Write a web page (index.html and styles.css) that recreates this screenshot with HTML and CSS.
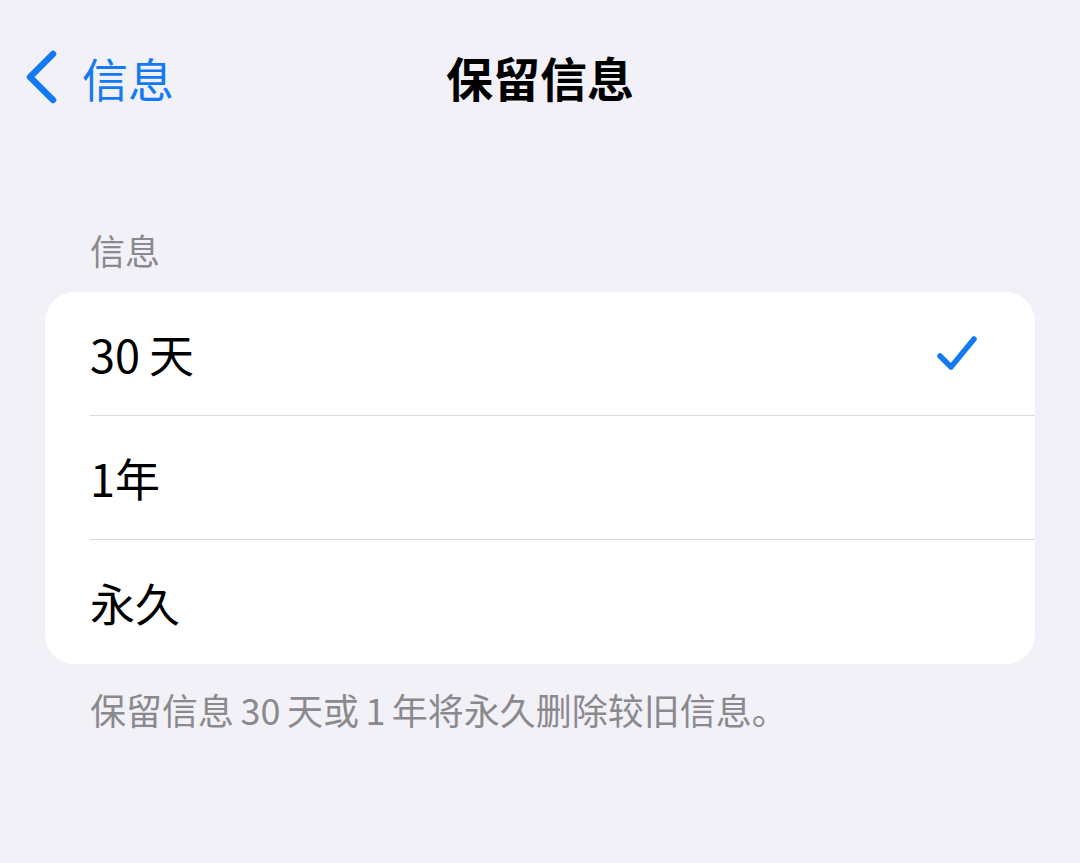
FILE: index.html
```html
<!DOCTYPE html>
<html lang="zh-CN">
<head>
    <meta charset="UTF-8">
    <meta name="viewport" content="width=device-width, initial-scale=1.0">
    <title>保留信息</title>
    <link rel="stylesheet" href="styles.css">
</head>
<body>

    <!-- Navigation bar -->
    <div class="nav">
        <div class="back">
            <svg class="chevron" width="36" height="56" viewBox="0 0 36 56">
                <path d="M31 5 L8 28 L31 51" fill="none" stroke="#147af3" stroke-width="6.5" stroke-linecap="round" stroke-linejoin="round"/>
            </svg>
            <span class="back-label">信息</span>
        </div>
        <div class="title">保留信息</div>
        <div></div>
    </div>

    <!-- Options -->
    <div class="section-label">信息</div>
    <div class="card">
        <div class="row">
            <span class="row-text"><span class="num">30</span>天</span>
            <svg class="check" width="44" height="42" viewBox="0 0 44 42">
                <path d="M5 23 L16 34 L39 6" fill="none" stroke="#147af3" stroke-width="5.5" stroke-linecap="round" stroke-linejoin="round"/>
            </svg>
        </div>
        <div class="row">
            <span class="row-text">1年</span>
        </div>
        <div class="row">
            <span class="row-text">永久</span>
        </div>
    </div>
    <div class="footer">保留信息<span class="num">30</span>天或<span class="num">1</span>年将永久删除较旧信息。</div>

</body>
</html>
```

FILE: styles.css
```css
body {
    margin: 0;
    background-color: #f2f1f7;
    font-family: "Noto Sans CJK SC", "Noto Sans", sans-serif;
    color: #000;
}
.nav {
    display: grid;
    grid-template-columns: 1fr auto 1fr;
    align-items: center;
    height: 154px;
}
.back {
    display: flex;
    align-items: center;
    padding-left: 22px;
    color: #147af3;
}
.chevron {
    margin-right: 24px;
}
.back-label {
    font-size: 46px;
    line-height: 56px;
}
.title {
    font-size: 47px;
    font-weight: bold;
    line-height: 56px;
}
.section-label {
    margin: 76px 0 22px 90px;
    font-size: 35px;
    line-height: 40px;
    color: #8a8a8e;
}
.card {
    margin: 0 45px;
    background: #fff;
    border-radius: 30px;
    overflow: hidden;
}
.row {
    display: flex;
    align-items: center;
    justify-content: space-between;
    height: 124px;
    margin-left: 45px;
    padding-right: 56px;
    border-bottom: 1.5px solid #d9d9dd;
    box-sizing: border-box;
}
.row:last-child {
    border-bottom: none;
}
.row-text {
    font-size: 45px;
}
.row-text .num {
    margin-right: 0.2em;
}
.footer {
    margin: 25px 0 0 90px;
    font-size: 36px;
    line-height: 40px;
    color: #8a8a8e;
}
.footer .num {
    margin: 0 0.18em;
}
```
